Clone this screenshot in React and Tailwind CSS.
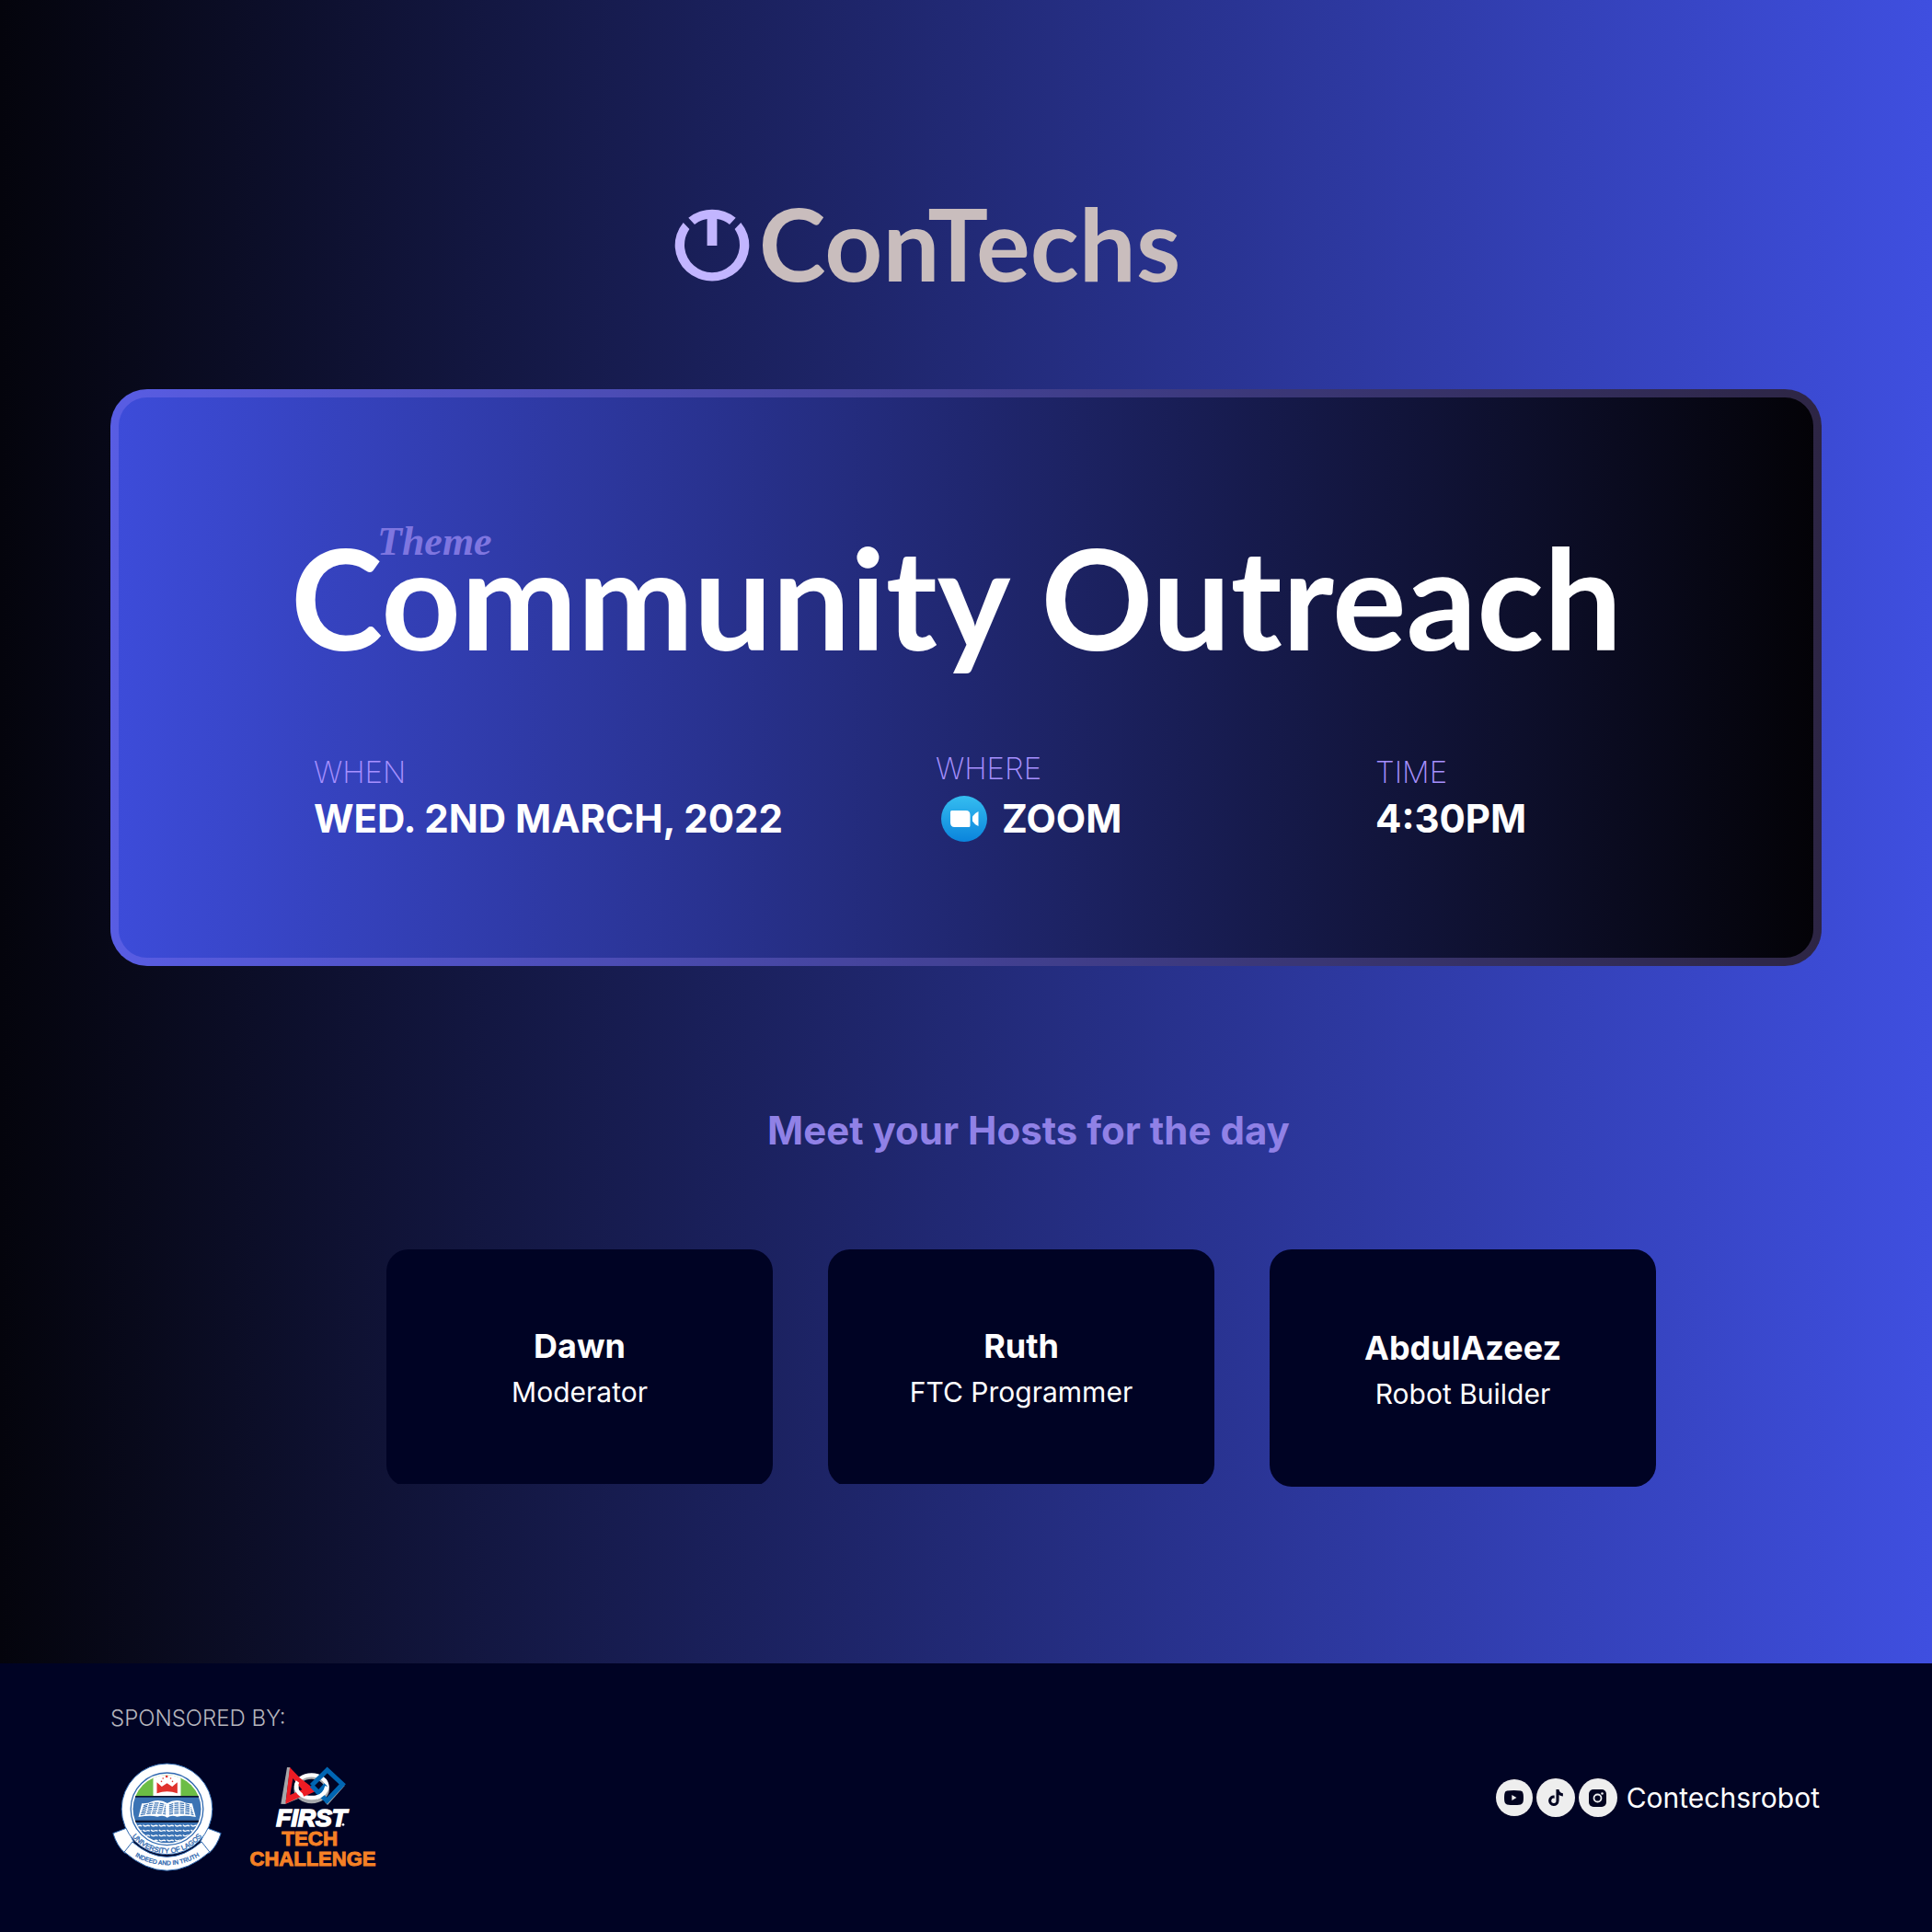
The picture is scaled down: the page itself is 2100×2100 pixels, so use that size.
import React from "react";
import { FaTiktok } from "react-icons/fa6";

const hosts = [
  { name: "Dawn", role: "Moderator", shape: "pt-[83px] [clip-path:inset(0_0_3px_0)]" },
  { name: "Ruth", role: "FTC Programmer", shape: "pt-[83px] [clip-path:inset(0_0_3px_0)]" },
  { name: "AbdulAzeez", role: "Robot Builder", shape: "pt-[85px]" },
];

function PowerMark() {
  return (
    <svg className="h-20 w-[82px]" viewBox="-41 -40 82 80" fill="#c2b5ff" aria-hidden="true">
      <path d="M-31.3-25A40.3 39 0 1 0 31.3-25L24.6-18A30 30 0 1 1-24.6-18Z" />
      <path d="M-25.7-30.3A40.3 39 0 0 1 25.7-30.3L19-23Q13-28 5.4-29V0H-5.4V-29Q-13-28-19-23Z" />
    </svg>
  );
}

function ZoomIcon() {
  return (
    <svg className="size-[50px]" viewBox="0 0 50 50" aria-hidden="true">
      <defs>
        <linearGradient id="zoomFill" x1="0" y1="0" x2="0" y2="1">
          <stop offset="0" stopColor="#35bdf0" />
          <stop offset="1" stopColor="#0a84dc" />
        </linearGradient>
      </defs>
      <circle cx="25" cy="25" r="25" fill="url(#zoomFill)" />
      <path d="M10 17.500q0-1.500 1.500-1.500H27q4.500 0 4.500 5v11.500q0 1.500-1.500 1.500H14.500q-4.500 0-4.500-5z" fill="#fff" />
      <path d="M34 22.500Q36 19 40.500 17v16Q36 31 34 27.500z" fill="#fff" />
    </svg>
  );
}

const waveRows = [434, 450, 466, 482];
const waveCols = [120, 146, 172, 198, 224, 250, 276, 302];
const bookRows = [0, 1, 2, 3, 4, 5];

function LagosLogo() {
  return (
    <svg className="h-[118px] w-[119px]" viewBox="35 228 356 354" role="img" aria-label="University of Lagos">
      <defs>
        <clipPath id="disc">
          <circle cx="213" cy="379" r="111" />
        </clipPath>
        <path id="arcOuter" d="M86 447A144 144 0 0 0 340 447" />
        <path id="arcRibbon" d="M90 520A206 206 0 0 0 338 520" />
      </defs>
      <path d="M37 458L82 441L104 486L76 523Q50 500 37 458Z" fill="#fff" stroke="#2f69b0" strokeWidth="3" />
      <path d="M389 458L344 441L322 486L350 523Q376 500 389 458Z" fill="#fff" stroke="#2f69b0" strokeWidth="3" />
      <circle cx="213" cy="379" r="148" fill="#fff" stroke="#2f69b0" strokeWidth="3" />
      <circle cx="213" cy="379" r="118" fill="none" stroke="#2f69b0" strokeWidth="4" />
      <g clipPath="url(#disc)">
        <rect x="100" y="264" width="228" height="74" fill="#6cbd45" />
        <rect x="168" y="264" width="90" height="74" fill="#fff" />
        <rect x="100" y="336" width="228" height="6" fill="#0b1530" />
        <rect x="100" y="341" width="228" height="78" fill="#3b73b4" />
        <rect x="100" y="416" width="228" height="7" fill="#0b1530" />
        <rect x="100" y="423" width="228" height="75" fill="#3b73b4" />
        {waveRows.map((y) =>
          waveCols.map((x) => (
            <path
              key={`${x}-${y}`}
              d={`M${x - 11} ${y - 3}q5 6 11 3t11 1`}
              fill="none"
              stroke="#fff"
              strokeWidth="4"
            />
          ))
        )}
      </g>
      <path d="M180 292L196 306L213 295L230 306L247 292V328Q213 316 180 328Z" fill="#e0322d" />
      <g fill="#e0322d">
        <circle cx="212" cy="273" r="4" />
        <circle cx="200" cy="279" r="2.500" />
        <circle cx="225" cy="279" r="2.500" />
        <circle cx="195" cy="289" r="2.500" />
        <circle cx="231" cy="289" r="2.500" />
      </g>
      <path
        d="M131 361Q152 362 165 354Q192 346 214 360Q238 346 262 354Q276 362 295 361L307 405Q270 398 246 404Q226 398 214 407Q202 398 182 404Q158 398 120 405Z"
        fill="#fff"
      />
      {bookRows.map((i) => (
        <g key={i} fill="none" stroke="#3b73b4" strokeWidth="3.500" strokeDasharray="14 4">
          <path d={`M${137 - i * 2} ${368 + i * 6}Q180 ${352 + i * 7} 209 ${366 + i * 6}`} />
          <path d={`M220 ${366 + i * 6}Q250 ${352 + i * 7} ${290 + i * 2} ${368 + i * 6}`} />
        </g>
      ))}
      <path d="M100 486Q213 584 326 486L352 519Q213 640 74 519Z" fill="#fff" stroke="#2f69b0" strokeWidth="3" />
      <g fill="#2f69b0" stroke="#2f69b0" strokeWidth="1" fontFamily="Liberation Sans, sans-serif" textAnchor="middle">
        <text fontSize="23">
          <textPath href="#arcOuter" startOffset="50%">UNIVERSITY OF LAGOS</textPath>
        </text>
        <text fontSize="20">
          <textPath href="#arcRibbon" startOffset="50%">INDEED AND IN TRUTH</textPath>
        </text>
      </g>
    </svg>
  );
}

function FirstLogo() {
  return (
    <svg className="h-[110px] w-[138px]" viewBox="480 240 414 330" role="img" aria-label="FIRST Tech Challenge">
      <path d="M603 243L613 243L598 362L583 362Z" fill="#a5a7aa" />
      <path d="M583 362L598 362L640 345L630 338Z" fill="#a5a7aa" />
      <ellipse cx="683" cy="313" rx="50" ry="40" fill="none" stroke="#a5a7aa" strokeWidth="16" />
      <path d="M612 243L686 320L598 362ZM622 279L613 333L652 316Z" fill="#ed1c24" fillRule="evenodd" />
      <ellipse cx="683" cy="305" rx="50" ry="37" fill="none" stroke="#fff" strokeWidth="13" />
      <path d="M630 275L686 318L655 332" fill="none" stroke="#ed1c24" strokeWidth="14" />
      <path d="M791 303L735 366L727 357L783 297Z" fill="#a5a7aa" />
      <path d="M683 302L734 252L784 298L733 352L706 326L730 300" fill="none" stroke="#0066b3" strokeWidth="15" />
      <path d="M683 302L706 326" fill="none" stroke="#0066b3" strokeWidth="15" />
      <path d="M733 305Q727 333 700 341" fill="none" stroke="#fff" strokeWidth="13" />
      <g fontFamily="Liberation Sans, sans-serif" fontWeight="bold" textAnchor="middle">
        <text x="683" y="435" fontSize="80" fontStyle="italic" fill="#fff" stroke="#fff" strokeWidth="5">FIRST</text>
        <text x="677" y="499" fontSize="67" fill="#f58025" stroke="#f58025" strokeWidth="3">TECH</text>
        <text x="687" y="563" fontSize="66" fill="#f58025" stroke="#f58025" strokeWidth="3">CHALLENGE</text>
      </g>
      <circle cx="786" cy="430" r="4" fill="#fff" />
    </svg>
  );
}

function Socials() {
  return (
    <div className="flex items-center gap-1">
      <a href="#youtube" aria-label="YouTube" className="flex size-10 items-center justify-center rounded-full bg-[#eeeeee]">
        <svg className="h-4 w-[21px]" viewBox="0 0 21 16" aria-hidden="true">
          <path d="M3 .6Q10.500-.5 18 .6Q20.400 1 20.700 4Q21.200 8 20.700 12Q20.400 15 18 15.400Q10.500 16.500 3 15.400Q.6 15 .3 12Q-.2 8 .3 4Q.6 1 3 .6Z" fill="#020420" />
          <path d="M8.300 5L13.500 8L8.300 11Z" fill="#eee" />
        </svg>
      </a>
      <a href="#tiktok" aria-label="TikTok" className="flex size-[42px] items-center justify-center rounded-full bg-[#eeeeee]">
        <FaTiktok className="size-[18px] text-[#020420]" />
      </a>
      <a href="#instagram" aria-label="Instagram" className="flex size-[42px] items-center justify-center rounded-full bg-[#eeeeee]">
        <svg className="size-[19px]" viewBox="0 0 19 19" aria-hidden="true">
          <rect width="19" height="19" rx="5" fill="#020420" />
          <circle cx="9.500" cy="9.500" r="4" fill="none" stroke="#eee" strokeWidth="1.800" />
          <circle cx="14.500" cy="4.500" r="1.300" fill="#eee" />
        </svg>
      </a>
    </div>
  );
}

export default function App() {
  return (
    <div className="flex min-h-screen flex-col bg-[linear-gradient(90deg,#04040c,#3f4fe0)] font-['Inter',sans-serif] text-white">
      <main className="flex-1 px-[120px] pt-[227px]">
        <header className="flex items-center justify-center gap-2.5 pr-[84px]">
          <PowerMark />
          <span className="pb-2 font-['Lato',sans-serif] text-[110px] leading-[72px] font-bold text-[#c9bdbd]">ConTechs</span>
        </header>

        <section className="mt-[116px] rounded-[40px] border-9 border-[#ac8fff]/25 bg-[linear-gradient(90deg,#3d4cda,#030206)] bg-origin-border px-[187px] pt-[137px] pb-[126px]">
          <p className="pl-[94px] font-['Liberation_Serif',serif] text-[44px] leading-10 font-bold text-[#7f76e0] italic">Theme</p>
          <h1 className="font-['Lato',sans-serif] text-[151px] leading-20 font-bold whitespace-nowrap">Community Outreach</h1>
          <dl className="mt-[130px] flex pl-[25px]">
            <div className="w-[676px]">
              <dt className="text-[33px] leading-10 font-extralight text-[#a791ff]">WHEN</dt>
              <dd className="mt-1.5 text-[42px] leading-[50px] font-bold">WED. 2ND MARCH, 2022</dd>
            </div>
            <div className="w-[478px]">
              <dt className="-mt-1 text-[33px] leading-10 font-extralight text-[#a791ff]">WHERE</dt>
              <dd className="mt-2.5 flex items-center gap-4 pl-1.5 text-[42px] leading-[50px] font-bold">
                <ZoomIcon />
                ZOOM
              </dd>
            </div>
            <div>
              <dt className="text-[33px] leading-10 font-extralight text-[#a791ff]">TIME</dt>
              <dd className="mt-1.5 text-[42px] leading-[50px] font-bold">4:30PM</dd>
            </div>
          </dl>
        </section>

        <h2 className="mt-[154px] pl-[136px] text-center text-[42px] leading-[50px] font-bold text-[#9081e6]">
          Meet your Hosts for the day
        </h2>

        <ul className="mt-[104px] grid grid-cols-3 gap-[60px] pr-[180px] pl-[300px] text-center">
          {hosts.map((host) => (
            <li key={host.name} className={`rounded-3xl bg-[#000324] pb-[79px] ${host.shape}`}>
              <p className="text-4xl leading-11 font-bold">{host.name}</p>
              <p className="mt-1.5 text-[30px] leading-11">{host.role}</p>
            </li>
          ))}
        </ul>
      </main>

      <footer className="flex h-[292px] justify-between bg-[#000324] px-[120px]">
        <div className="pt-11">
          <p className="text-2xl leading-8 font-light text-[#b5b5bd]">SPONSORED BY:</p>
          <div className="mt-8 flex items-center gap-[30px] pl-0.5">
            <LagosLogo />
            <FirstLogo />
          </div>
        </div>
        <div className="flex h-[292px] items-center gap-2.5 pr-0.5">
          <Socials />
          <span className="text-[30px]">Contechsrobot</span>
        </div>
      </footer>
    </div>
  );
}
